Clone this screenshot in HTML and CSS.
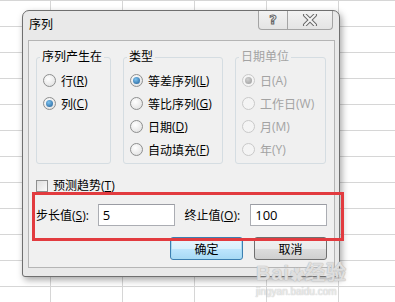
FILE: index.html
```html
<!DOCTYPE html>
<html lang="zh-CN">
<head>
    <meta charset="UTF-8">
    <title>序列</title>
    <link rel="stylesheet" href="styles.css">
</head>
<body>

<div class="dialog">
    <div class="titlebar">
        <span class="title">序列</span>
        <div class="title-btns">
            <span class="tb-help">?</span>
            <span class="tb-close">
                <svg width="16" height="12" viewBox="0 0 16 12">
                    <path d="M3 1 L13 11 M13 1 L3 11" stroke="#6a6a6a" stroke-width="4" stroke-linecap="round"/>
                    <path d="M3 1 L13 11 M13 1 L3 11" stroke="#f4f4f4" stroke-width="2" stroke-linecap="round"/>
                </svg>
            </span>
        </div>
    </div>

    <div class="content">
        <div class="groups">
            <fieldset class="group g-rows">
                <legend>序列产生在</legend>
                <div class="radio-row"><span class="radio"></span>行<span class="key">(<u>R</u>)</span></div>
                <div class="radio-row"><span class="radio on"></span>列<span class="key">(<u>C</u>)</span></div>
            </fieldset>
            <fieldset class="group g-type">
                <legend>类型</legend>
                <div class="radio-row"><span class="radio on"></span>等差序列<span class="key">(<u>L</u>)</span></div>
                <div class="radio-row"><span class="radio"></span>等比序列<span class="key">(<u>G</u>)</span></div>
                <div class="radio-row"><span class="radio"></span>日期<span class="key">(<u>D</u>)</span></div>
                <div class="radio-row"><span class="radio"></span>自动填充<span class="key">(<u>F</u>)</span></div>
            </fieldset>
            <fieldset class="group g-date disabled">
                <legend>日期单位</legend>
                <div class="radio-row"><span class="radio on"></span>日<span class="key">(A)</span></div>
                <div class="radio-row"><span class="radio"></span>工作日<span class="key">(W)</span></div>
                <div class="radio-row"><span class="radio"></span>月<span class="key">(M)</span></div>
                <div class="radio-row"><span class="radio"></span>年<span class="key">(Y)</span></div>
            </fieldset>
        </div>

        <div class="check-row"><span class="checkbox"></span>预测趋势<span class="key">(<u>T</u>)</span></div>

        <div class="input-row">
            <label class="lbl-step">步长值<span class="key">(<u>S</u>):</span></label>
            <div class="textbox">5</div>
            <label class="lbl-stop">终止值<span class="key">(<u>O</u>):</span></label>
            <div class="textbox">100</div>
        </div>

        <div class="btn-row">
            <button class="btn btn-default">确定</button>
            <button class="btn">取消</button>
        </div>
    </div>
</div>

<!-- marca roja sobre la captura -->
<div class="highlight"></div>

<div class="watermark">
    <div class="wm-logo">Bai<span class="wm-paw">&#10047;</span>经验</div>
    <div class="wm-url">jingyan.baidu.com</div>
</div>

</body>
</html>
```

FILE: styles.css
```css
* {
    box-sizing: border-box;
}

body {
    margin: 0;
    width: 395px;
    height: 302px;
    overflow: hidden;
    position: relative;
    font-family: "Open Sans", "Noto Sans CJK SC", sans-serif;
    font-size: 12px;
    color: #000;
    text-autospace: no-autospace;
    background-color: #fff;
    background-image:
        linear-gradient(to right, #d6d6d6 1px, transparent 1px),
        linear-gradient(to bottom, #d6d6d6 1px, transparent 1px);
    background-size: 72px 26px;
    background-position: 50px 0;
    padding-top: 10px;
}

.key {
    font-family: "Open Sans", "Liberation Sans", sans-serif;
}

/* ventana */
.dialog {
    margin-left: 22px;
    width: 318px;
    height: 267px;
    border: 1px solid #6f6f6f;
    border-radius: 7px 7px 3px 3px;
    background-color: #e9e9e9;
    box-shadow: 2px 3px 7px rgba(0, 0, 0, 0.35);
    display: flex;
    flex-direction: column;
}

.titlebar {
    height: 29px;
    display: flex;
    justify-content: space-between;
    align-items: flex-start;
    padding-left: 6px;
    padding-right: 6px;
}

.title {
    margin-top: 6px;
    font-size: 12px;
    line-height: 16px;
}

.title-btns {
    display: flex;
    height: 19px;
    border: 1px solid #a4a4a4;
    border-top: none;
    border-radius: 0 0 4px 4px;
    background: linear-gradient(#f2f2f2, #e4e4e4);
}

.tb-help {
    width: 29px;
    text-align: center;
    border-right: 1px solid #a4a4a4;
    font-family: "DejaVu Sans", sans-serif;
    font-weight: bold;
    font-size: 13px;
    line-height: 18px;
    color: #f4f4f4;
    -webkit-text-stroke: 1px #666;
}

.tb-close {
    width: 44px;
    display: flex;
    justify-content: center;
    align-items: center;
}

.content {
    flex: 1;
    margin: 0 4px 8px 5px;
    border: 1px solid #b5b5b5;
    background-color: #f0f0f0;
    padding: 8px 7px 0 7px;
}

/* grupos */
.groups {
    display: flex;
    gap: 12px;
}

.group {
    margin: 0;
    padding: 4px 0 2px 6px;
    border: 1px solid #d5dde2;
    border-radius: 3px;
}

.group legend {
    margin-left: -3px;
    padding: 0 2px;
    line-height: 16px;
}

.g-rows { width: 75px; }
.g-type { width: 100px; }
.g-date { width: 91px; }

.radio-row {
    height: 23px;
    display: flex;
    align-items: center;
    white-space: nowrap;
}

.radio {
    width: 13px;
    height: 13px;
    margin-right: 5px;
    border-radius: 50%;
    border: 1px solid #8e8f8f;
    background: radial-gradient(circle at 40% 35%, #ffffff, #dcdcdc);
    position: relative;
    flex-shrink: 0;
}

.radio.on::after {
    content: "";
    position: absolute;
    left: 2px;
    top: 2px;
    width: 7px;
    height: 7px;
    border-radius: 50%;
    background: radial-gradient(circle at 40% 35%, #7ec3f0, #1d5b94);
}

.disabled {
    color: #a3a3a3;
}

.disabled .radio {
    border-color: #c9c9c9;
    background: #f4f4f4;
}

.disabled .radio.on::after {
    background: radial-gradient(circle at 40% 35%, #d0d0d0, #9a9a9a);
}

.check-row {
    margin-top: 15px;
    height: 14px;
    display: flex;
    align-items: center;
    line-height: 14px;
}

.checkbox {
    width: 12px;
    height: 12px;
    margin-right: 5px;
    border: 1px solid #8e8f8f;
    background: linear-gradient(135deg, #dedede, #fafafa);
}

.input-row {
    margin-top: 11px;
    display: flex;
    align-items: center;
}

.lbl-step {
    width: 62px;
}

.lbl-stop {
    width: 66px;
    margin-left: 10px;
}

.textbox {
    width: 77px;
    height: 22px;
    border: 1px solid #abadb3;
    border-top-color: #9a9ca3;
    background: #fff;
    padding-left: 4px;
    line-height: 20px;
    font-size: 13px;
}

.btn-row {
    margin-top: 11px;
    display: flex;
    justify-content: flex-end;
    gap: 11px;
}

.btn {
    width: 73px;
    height: 23px;
    border: 1px solid #707070;
    border-radius: 3px;
    background: linear-gradient(#f2f2f2 0%, #ebebeb 50%, #dddddd 51%, #cfcfcf 100%);
    font-family: "Noto Sans CJK SC", sans-serif;
    font-size: 12px;
    padding: 0;
    color: #000;
}

.btn-default {
    border-color: #3c7fb1;
    box-shadow: inset 0 0 0 1px #a8dbf3;
    background: linear-gradient(#eaf6fd 0%, #d9f0fc 50%, #bee6fd 51%, #a7d9f5 100%);
}

/* marca */
.highlight {
    position: absolute;
    left: 32px;
    top: 192px;
    width: 312px;
    height: 49px;
    border: 3px solid #e23b3f;
}

.watermark {
    position: absolute;
    left: 256px;
    top: 262px;
    color: rgba(255, 255, 255, 0.6);
    text-shadow: 0 0 1px #b0b0b0, 0 0 1px #b0b0b0;
    font-family: "Liberation Sans", sans-serif;
}

.wm-logo {
    font-size: 20px;
    font-weight: bold;
    line-height: 22px;
    letter-spacing: 1px;
}

.wm-paw {
    font-size: 14px;
}

.wm-url {
    font-size: 10px;
    line-height: 12px;
    opacity: 0.7;
}
```
